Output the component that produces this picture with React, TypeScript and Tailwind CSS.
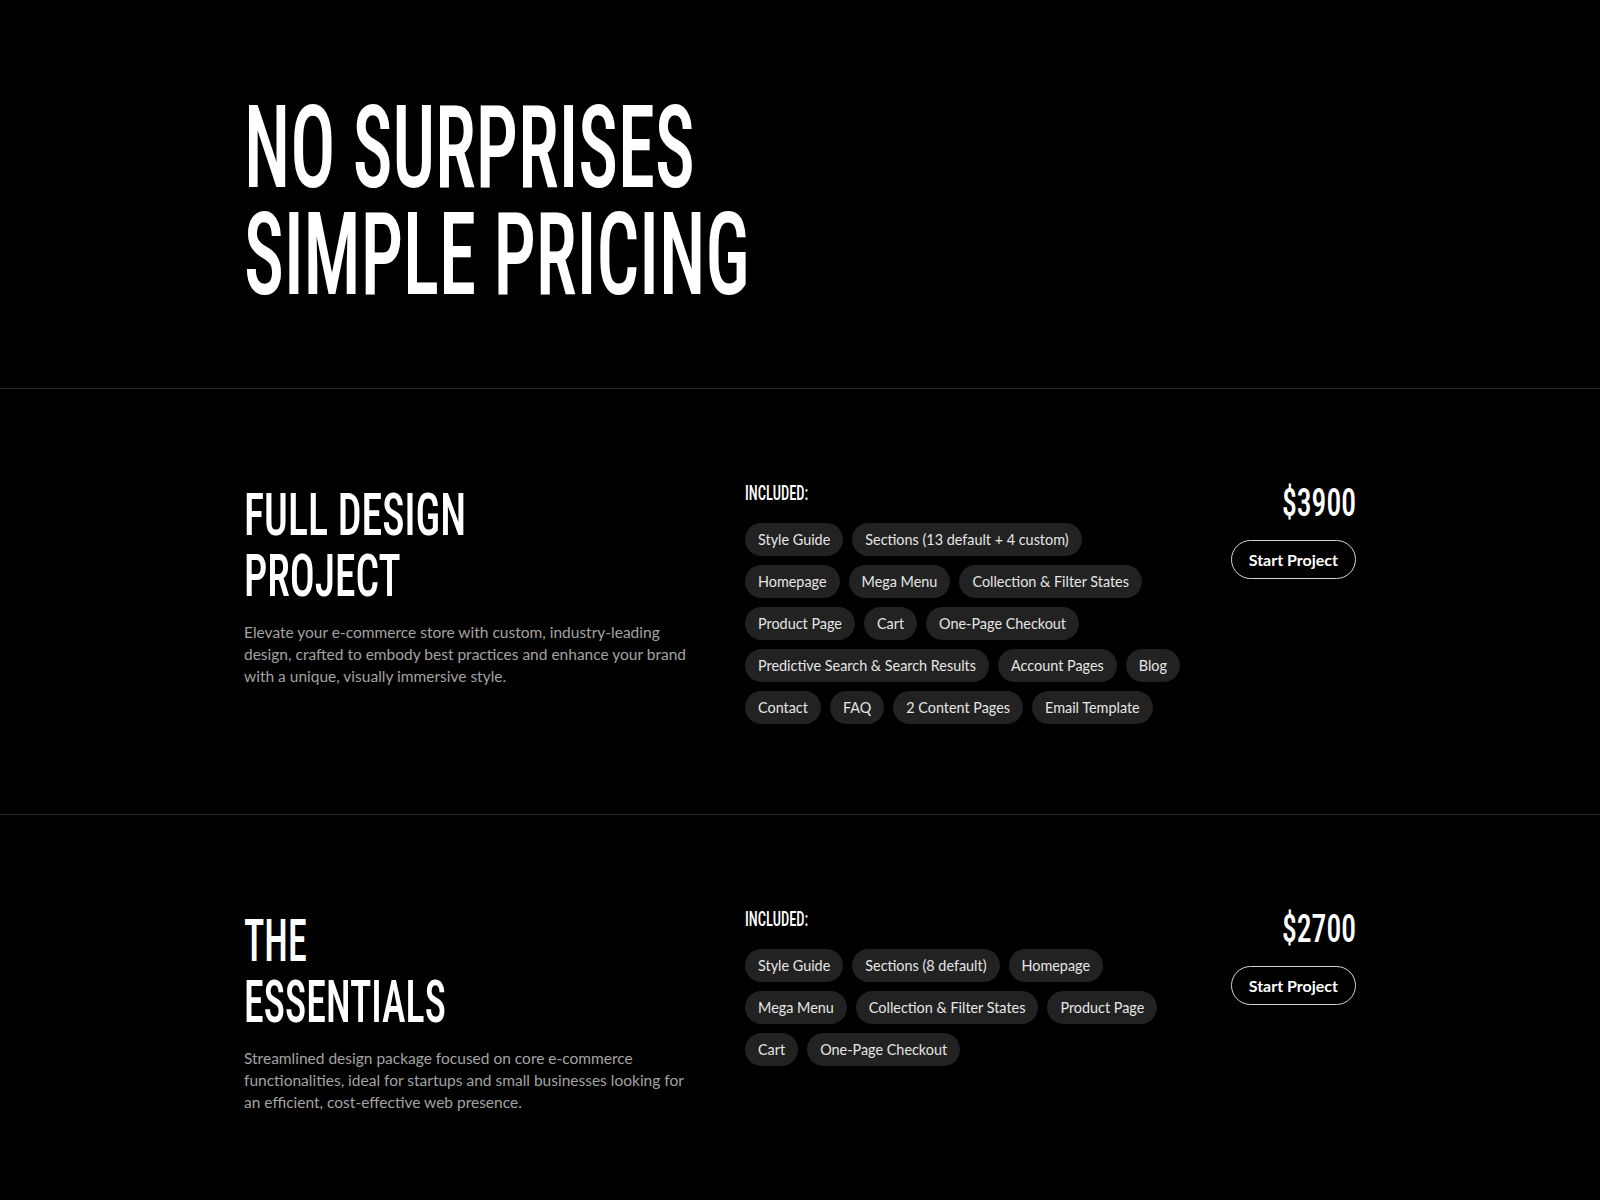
import React, { useLayoutEffect, useRef, useState } from 'react';

const display = "font-['Roboto_Condensed','Liberation_Sans',sans-serif] font-medium text-white";
const body = "font-['Lato','Open_Sans',sans-serif]";

// squeezes a line of display text horizontally to the width it has in the design
const Fit = ({ text, width, right = false }: { text: string; width: number; right?: boolean }) => {
  const ref = useRef<HTMLSpanElement>(null);
  const [scale, setScale] = useState(0.6);
  useLayoutEffect(() => {
    const measure = () => {
      if (ref.current) setScale(width / ref.current.offsetWidth);
    };
    measure();
    document.fonts?.ready.then(measure);
  }, [width, text]);
  return (
    <span
      ref={ref}
      className="inline-block whitespace-nowrap"
      style={{ transform: `scaleX(${scale})`, transformOrigin: right ? 'right' : 'left' }}
    >
      {text}
    </span>
  );
};

type Line = { text: string; width: number };
type Plan = {
  title: Line[];
  description: string;
  rows: string[][];
  price: string;
};

const plans: Plan[] = [
  {
    title: [
      { text: 'FULL DESIGN', width: 222 },
      { text: 'PROJECT', width: 157 },
    ],
    description:
      'Elevate your e-commerce store with custom, industry-leading design, crafted to embody best practices and enhance your brand with a unique, visually immersive style.',
    rows: [
      ['Style Guide', 'Sections (13 default + 4 custom)'],
      ['Homepage', 'Mega Menu', 'Collection & Filter States'],
      ['Product Page', 'Cart', 'One-Page Checkout'],
      ['Predictive Search & Search Results', 'Account Pages', 'Blog'],
      ['Contact', 'FAQ', '2 Content Pages', 'Email Template'],
    ],
    price: '$3900',
  },
  {
    title: [
      { text: 'THE', width: 63 },
      { text: 'ESSENTIALS', width: 202 },
    ],
    description:
      'Streamlined design package focused on core e-commerce functionalities, ideal for startups and small businesses looking for an efficient, cost-effective web presence.',
    rows: [
      ['Style Guide', 'Sections (8 default)', 'Homepage'],
      ['Mega Menu', 'Collection & Filter States', 'Product Page'],
      ['Cart', 'One-Page Checkout'],
    ],
    price: '$2700',
  },
];

const PlanRow = ({ plan }: { plan: Plan }) => (
  <section className="border-t border-[#2a2a2a]">
    <div className="mx-auto flex w-[1112px] pt-[92px] pb-[90px]">
      {/* name + blurb */}
      <div className="mt-[3px] w-[456px] shrink-0">
        <h2 className={`${display} text-[60px] leading-[61px]`}>
          {plan.title.map(line => (
            <div key={line.text}>
              <Fit text={line.text} width={line.width} />
            </div>
          ))}
        </h2>
        <p className={`${body} mt-[15px] text-[15.5px] leading-[22px] text-[#a3a3a3]`}>
          {plan.description}
        </p>
      </div>
      {/* included items */}
      <div className="ml-[45px] w-[440px] shrink-0">
        <div className={`${display} text-[21px] leading-[24px]`}>
          <Fit text="INCLUDED:" width={63} />
        </div>
        <div className="mt-[18px] flex flex-col gap-[9px]">
          {plan.rows.map((row, i) => (
            <div key={i} className="flex gap-[9px]">
              {row.map(item => (
                <span
                  key={item}
                  className={`${body} flex h-[33px] items-center whitespace-nowrap rounded-full bg-[#222222] px-[13px] text-[14.4px] text-[#e5e5e5]`}
                >
                  {item}
                </span>
              ))}
            </div>
          ))}
        </div>
      </div>
      {/* price */}
      <div className="flex flex-1 flex-col items-end">
        <div className={`${display} text-[38px] leading-[44px]`}>
          <Fit text={plan.price} width={74} right />
        </div>
        <button
          className={`${body} mt-[15px] h-[39px] rounded-full border-[1.5px] border-[#d4d4d4] px-[17px] text-[16px] font-bold text-white`}
        >
          Start Project
        </button>
      </div>
    </div>
  </section>
);

const App = () => {
  return (
    <div className="min-h-screen bg-black">
      <header>
        <div className="mx-auto w-[1112px] pt-[94px] pb-[80px]">
          <h1 className={`${display} text-[115px] leading-[107px]`}>
            <div>
              <Fit text="NO SURPRISES" width={451} />
            </div>
            <div>
              <Fit text="SIMPLE PRICING" width={506} />
            </div>
          </h1>
        </div>
      </header>
      {plans.map(plan => (
        <PlanRow key={plan.price} plan={plan} />
      ))}
    </div>
  );
};

export default App;
